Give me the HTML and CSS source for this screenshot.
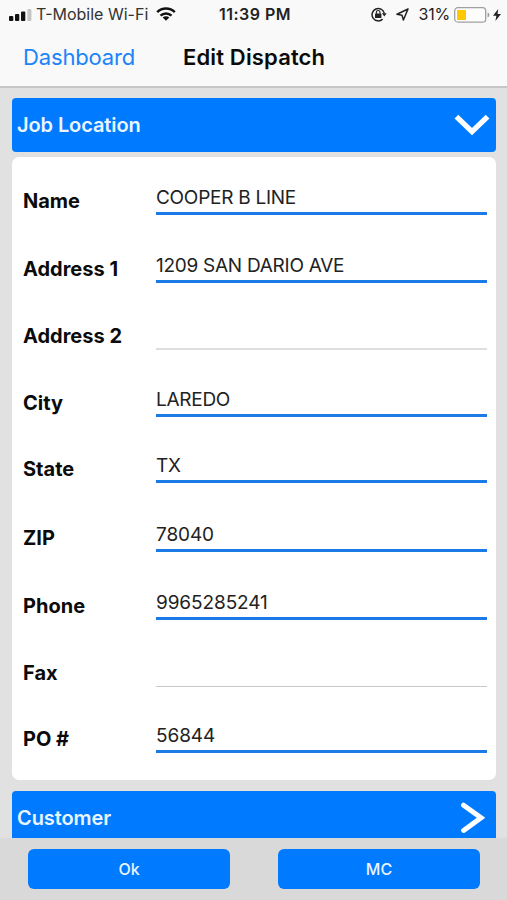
FILE: index.html
```
<!DOCTYPE html>
<html lang="en">
<head>
    <meta charset="UTF-8">
    <meta name="viewport" content="width=device-width, initial-scale=1.0">
    <title>Edit Dispatch</title>
    <link rel="stylesheet" href="styles.css">
</head>
<body>

    <header class="top">
        <div class="status-bar">
            <div class="status-left">
                <svg class="signal" width="23" height="12" viewBox="0 0 23 12">
                    <rect x="0" y="7" width="4.3" height="5" rx="1" fill="#111"/>
                    <rect x="6" y="5" width="4.3" height="7" rx="1" fill="#111"/>
                    <rect x="12" y="2.5" width="4.3" height="9.5" rx="1" fill="#111"/>
                    <rect x="18.4" y="0" width="4" height="12" rx="1" fill="#c4c4c4"/>
                </svg>
                <span class="carrier">T-Mobile Wi-Fi</span>
                <svg class="wifi" width="20" height="14" viewBox="0 0 20 14" fill="none" stroke="#111" stroke-width="2.5">
                    <path d="M1.2 5.2A12.6 12.6 0 0 1 18.8 5.2"/>
                    <path d="M4.5 8.7A8 8 0 0 1 15.5 8.7"/>
                    <path d="M10 13.8L6.7 10.6A4.7 4.7 0 0 1 13.3 10.6Z" fill="#111" stroke="none"/>
                </svg>
            </div>
            <div class="clock">11:39 PM</div>
            <div class="status-right">
                <svg class="lock" width="16" height="15" viewBox="0 0 16 15" fill="none" stroke="#222" stroke-width="1.5">
                    <path d="M11.6 12.1A6.2 6.2 0 1 1 13.3 6.3"/>
                    <path d="M10.9 6.3H15.7L13.3 9.6Z" fill="#222" stroke="none"/>
                    <rect x="4" y="6.4" width="6.4" height="4.6" rx=".6" fill="#222" stroke="none"/>
                    <path d="M5.4 6.7V5.3A1.8 1.8 0 0 1 9 5.3V6.7" stroke-width="1.2"/>
                </svg>
                <svg class="arrow" width="13" height="13" viewBox="0 0 13 13" fill="none" stroke="#222" stroke-width="1.5" stroke-linejoin="round">
                    <path d="M12 1L1 6.3L6 7.2L7.4 12Z"/>
                </svg>
                <span class="percent">31%</span>
                <svg class="battery" width="36" height="16" viewBox="0 0 36 16">
                    <rect x=".7" y=".7" width="31" height="14.4" rx="3.2" fill="#fdfdfd" stroke="#a0a0a0" stroke-width="1.3"/>
                    <rect x="3" y="3" width="9" height="10" fill="#ffc800"/>
                    <path d="M33.6 5.6Q35.4 6 35.4 8T33.6 10.4Z" fill="#999"/>
                </svg>
                <svg class="bolt" width="8" height="12" viewBox="0 0 8 12">
                    <path d="M5.2 0L0 6.8H3.4L2.4 12L8 5H4.5Z" fill="#222"/>
                </svg>
            </div>
        </div>
        <nav class="nav-bar">
            <a class="back">Dashboard</a>
            <h1 class="title">Edit Dispatch</h1>
        </nav>
    </header>

    <main class="content">
        <div class="section-head">
            <span>Job Location</span>
            <svg class="chevron-down" width="36" height="22" viewBox="0 0 36 22" fill="none" stroke="#fff" stroke-width="5.4">
                <path d="M2.4 2.6L18 17.6L33.6 2.6"/>
            </svg>
        </div>

        <section class="card">
            <div class="row first">
                <label>Name</label>
                <div class="field filled caps">COOPER B LINE</div>
            </div>
            <div class="row tall">
                <label>Address 1</label>
                <div class="field filled caps">1209 SAN DARIO AVE</div>
            </div>
            <div class="row">
                <label>Address 2</label>
                <div class="field"></div>
            </div>
            <div class="row">
                <label>City</label>
                <div class="field filled caps">LAREDO</div>
            </div>
            <div class="row short">
                <label>State</label>
                <div class="field filled caps">TX</div>
            </div>
            <div class="row taller">
                <label>ZIP</label>
                <div class="field filled">78040</div>
            </div>
            <div class="row tall">
                <label>Phone</label>
                <div class="field filled">9965285241</div>
            </div>
            <div class="row">
                <label>Fax</label>
                <div class="field thin"></div>
            </div>
            <div class="row short">
                <label>PO #</label>
                <div class="field filled">56844</div>
            </div>
        </section>

        <div class="section-head customer">
            <span>Customer</span>
            <svg class="chevron-right" width="24" height="32" viewBox="0 0 24 32" fill="none" stroke="#fff" stroke-width="5" stroke-linecap="round">
                <path d="M2.6 3.2L20 15.8L2.6 28.4"/>
            </svg>
        </div>
    </main>

    <footer class="actions">
        <button>Ok</button>
        <button>MC</button>
    </footer>

</body>
</html>
```
FILE: styles.css
```
* {
    box-sizing: border-box;
}
body {
    font-family: Inter, "Liberation Sans", sans-serif;
    background-color: #e1e1e2;
    color: #0b0b0b;
    margin: 0;
    height: 900px;
    display: flex;
    flex-direction: column;
    overflow: hidden;
}
.top {
    height: 88px;
    flex: none;
    background: #f9f9f9;
    border-bottom: 2px solid #c6c6c7;
}
.status-bar {
    height: 29px;
    display: grid;
    grid-template-columns: 1fr auto 1fr;
    align-items: center;
    padding: 0 6px 0 9px;
    font-size: 16px;
    line-height: 29px;
}
.status-left, .status-right {
    display: flex;
    align-items: center;
}
.status-right {
    justify-content: flex-end;
}
.carrier {
    margin-left: 4px;
    letter-spacing: 0;
    color: #333;
}
.wifi {
    margin-left: 8px;
    margin-bottom: 2px;
}
.clock {
    font-weight: 600;
    letter-spacing: 0.5px;
    color: #222;
}
.arrow {
    margin-left: 9px;
}
.percent {
    margin: 0 4px 0 9px;
    letter-spacing: -0.2px;
    color: #222;
}
.bolt {
    margin-left: 3px;
}
.nav-bar {
    height: 55px;
    display: flex;
    align-items: center;
    padding-left: 23px;
}
.back {
    width: 160px;
    font-size: 22px;
    letter-spacing: -0.15px;
    color: #1c83f8;
}
.title {
    margin: 0;
    font-size: 22px;
    font-weight: 600;
    letter-spacing: 0.15px;
}
.content {
    height: 750px;
    padding: 10px 11px 0 12px;
    overflow: hidden;
}
.section-head {
    height: 54px;
    display: flex;
    align-items: center;
    justify-content: space-between;
    padding: 0 6px 0 5px;
    background: #007aff;
    border-radius: 4px;
    color: #e9f5ff;
    font-size: 20px;
    font-weight: 600;
    letter-spacing: -0.1px;
}
.customer {
    padding-right: 11px;
}
.card {
    height: 623px;
    margin: 5px 0 11px;
    padding: 0 9px 0 11px;
    background: #fff;
    border-radius: 7px;
}
.row {
    height: 67px;
    display: flex;
    align-items: flex-end;
}
.row.first {
    height: 58px;
}
.row.tall {
    height: 68px;
}
.row.taller {
    height: 69px;
}
.row.short {
    height: 66px;
}
.row label {
    width: 133px;
    flex: none;
    font-size: 20px;
    font-weight: 700;
    line-height: 27px;
}
.field {
    flex: 1;
    height: 31px;
    border-bottom: 2px solid #dedede;
    font-size: 19px;
    line-height: 28px;
    letter-spacing: -0.1px;
    color: #222;
}
.field.filled {
    border-bottom: 3px solid #1b7be6;
}
.field.caps {
    letter-spacing: -0.27px;
}
.field.thin {
    border-bottom: 1px solid #c8c8c8;
}
.actions {
    height: 62px;
    flex: none;
    display: flex;
    justify-content: space-between;
    padding: 11px 27px 11px 28px;
    background: #d9d9da;
}
.actions button {
    width: 202px;
    height: 40px;
    border: none;
    border-radius: 6px;
    background: #007aff;
    color: #e9f5ff;
    font-family: inherit;
    font-size: 16px;
    font-weight: 500;
}
```
